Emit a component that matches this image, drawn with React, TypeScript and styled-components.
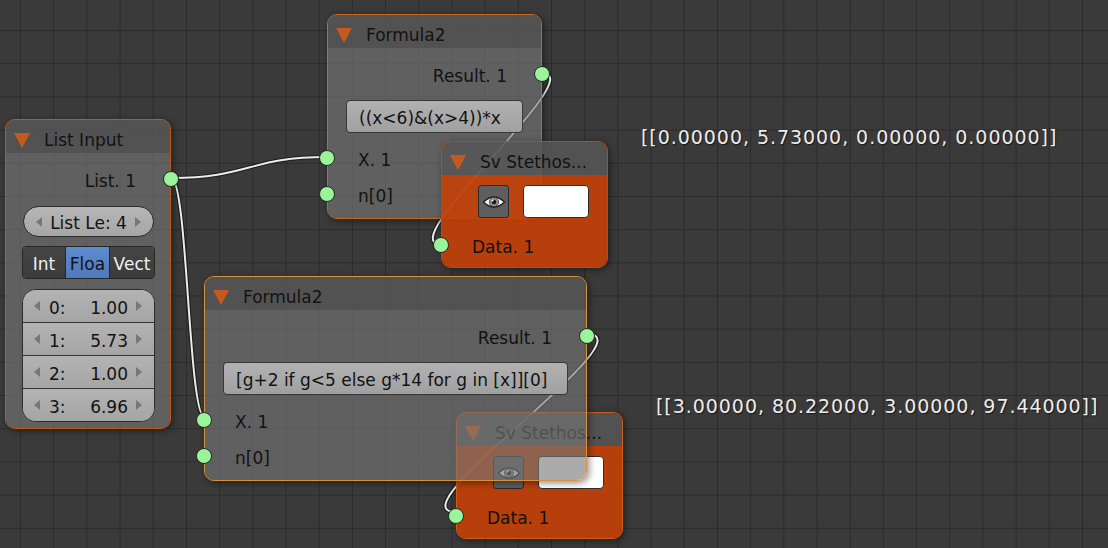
import React from "react";
import styled, { createGlobalStyle } from "styled-components";

const links = [
  { from: [171, 178], to: [327, 157] },
  { from: [171, 178], to: [205, 418] },
  { from: [542, 73], to: [441, 244] },
  { from: [587, 334], to: [456, 512] },
];

// blender style bezier: handle length is half the horizontal distance
function linkPath(from: number[], to: number[]) {
  const h = Math.abs(to[0] - from[0]) * 0.5;
  return `M${from[0]},${from[1]} C${from[0] + h},${from[1]} ${to[0] - h},${to[1]} ${to[0]},${to[1]}`;
}

function EyeIcon() {
  return (
    <svg width="24" height="14" viewBox="0 0 24 14">
      <path d="M1.5 7 Q12 -3 22.5 7 Q12 17 1.5 7 Z" fill="#f2f2f2" stroke="#1e1e1e" strokeWidth="1.3" />
      <circle cx="12" cy="7" r="4.6" fill="#8c8c8c" stroke="#3a3a3a" strokeWidth="0.8" />
      <circle cx="12" cy="7" r="2.2" fill="#151515" />
      <circle cx="10.6" cy="5.6" r="1" fill="#ffffff" />
    </svg>
  );
}

type NodeProps = {
  title: string;
  x: number;
  y: number;
  w: number;
  z: number;
  edge: string;
  tone?: "gray" | "orange";
  children: React.ReactNode;
};

function Node({ title, x, y, w, z, edge, tone = "gray", children }: NodeProps) {
  return (
    <NodeFrame $x={x} $y={y} $w={w} $z={z} $edge={edge}>
      <Header>
        <Collapse />
        <Title>{title}</Title>
      </Header>
      <Body $tone={tone}>{children}</Body>
    </NodeFrame>
  );
}

function OutputRow({ label }: { label: string }) {
  return (
    <OutRow>
      {label}
      <Socket $side="right" />
    </OutRow>
  );
}

function InputRow({ label, tall }: { label: string; tall?: boolean }) {
  return (
    <InRow $tall={tall}>
      <Socket $side="left" />
      {label}
    </InRow>
  );
}

function Stethoscope({ x, y, z, edge }: { x: number; y: number; z: number; edge: string }) {
  return (
    <Node title="Sv Stethos..." x={x} y={y} w={167} z={z} edge={edge} tone="orange">
      <ControlRow>
        <EyeButton>
          <EyeIcon />
        </EyeButton>
        <ColorField />
      </ControlRow>
      <InputRow label="Data. 1" />
    </Node>
  );
}

export default function App() {
  const values = [
    ["0:", "1.00"],
    ["1:", "5.73"],
    ["2:", "1.00"],
    ["3:", "6.96"],
  ];

  return (
    <Canvas>
      <GlobalStyle />
      <Links width="1108" height="548" viewBox="0 0 1108 548">
        {links.map((l, i) => (
          <g key={i} fill="none">
            <path d={linkPath(l.from, l.to)} stroke="#1c1c1c" strokeWidth="4.2" />
            <path d={linkPath(l.from, l.to)} stroke="#ececec" strokeWidth="2" />
          </g>
        ))}
      </Links>

      <Node title="List Input" x={5} y={119} w={166} z={1} edge="#c2591c">
        <OutputRow label="List. 1" />
        <Pill>
          <Arrow $dir="left" />
          <span>List Le: 4</span>
          <Arrow $dir="right" />
        </Pill>
        <Enum>
          <EnumItem $w={42}>Int</EnumItem>
          <EnumItem $w={43} $active>Floa</EnumItem>
          <EnumItem>Vect</EnumItem>
        </Enum>
        <NumList>
          {values.map(([k, v]) => (
            <NumRow key={k}>
              <Arrow $dir="left" />
              <NumKey>{k}</NumKey>
              <NumValue>{v}</NumValue>
              <Arrow $dir="right" />
            </NumRow>
          ))}
        </NumList>
      </Node>

      <Node title="Formula2" x={327} y={14} w={215} z={2} edge="#c9661f">
        <OutputRow label="Result. 1" />
        <Field>((x&lt;6)&amp;(x&gt;4))*x</Field>
        <InputRow label="X. 1" tall />
        <InputRow label="n[0]" tall />
      </Node>

      <Stethoscope x={441} y={141} z={3} edge="#b94c14" />

      <Stethoscope x={456} y={412} z={4} edge="#cf5e1a" />

      <Node title="Formula2" x={204} y={276} w={383} z={5} edge="#d8913f">
        <OutputRow label="Result. 1" />
        <Field>[g+2 if g&lt;5 else g*14 for g in [x]][0]</Field>
        <InputRow label="X. 1" tall />
        <InputRow label="n[0]" tall />
      </Node>

      <Readout $x={641} $y={126}>[[0.00000, 5.73000, 0.00000, 0.00000]]</Readout>
      <Readout $x={656} $y={395}>[[3.00000, 80.22000, 3.00000, 97.44000]]</Readout>
    </Canvas>
  );
}

const GlobalStyle = createGlobalStyle`
  html, body {
    margin: 0;
    padding: 0;
    background: #393939;
    overflow: hidden;
  }
  body {
    font-family: "DejaVu Sans", "Liberation Sans", sans-serif;
  }
`;

const Canvas = styled.div`
  position: relative;
  width: 1108px;
  height: 548px;
  overflow: hidden;
  background-color: #3a3a3a;
  background-image:
    linear-gradient(to right, #2b2b2b 1.4px, transparent 1.4px),
    linear-gradient(to bottom, #2b2b2b 1.4px, transparent 1.4px);
  background-size: 33.2px 33.2px;
  background-position: 20px 30px;
  font-family: "DejaVu Sans", "Liberation Sans", sans-serif;
`;

const Links = styled.svg`
  position: absolute;
  left: 0;
  top: 0;
  z-index: 0;
`;

const NodeFrame = styled.div<{ $x: number; $y: number; $w: number; $z: number; $edge: string }>`
  position: absolute;
  left: ${(p) => p.$x}px;
  top: ${(p) => p.$y}px;
  width: ${(p) => p.$w}px;
  z-index: ${(p) => p.$z};
  box-sizing: border-box;
  border: 1px solid ${(p) => p.$edge};
  border-radius: 10px;
  box-shadow: 2px 2px 7px rgba(0, 0, 0, 0.45);
  display: flex;
  flex-direction: column;
`;

const Header = styled.div`
  height: 33px;
  box-sizing: border-box;
  padding: 7px 0 0 8px;
  display: flex;
  align-items: center;
  background: rgba(86, 86, 86, 0.86);
  border-radius: 9px 9px 0 0;
`;

const Collapse = styled.span`
  width: 0;
  height: 0;
  border-left: 8px solid transparent;
  border-right: 8px solid transparent;
  border-top: 15px solid #c65a1c;
`;

const Title = styled.span`
  margin-left: 14px;
  font-size: 17px;
  color: #121212;
  white-space: nowrap;
`;

const Body = styled.div<{ $tone: "gray" | "orange" }>`
  display: flex;
  flex-direction: column;
  padding: 10px 0 6px;
  border-radius: 0 0 9px 9px;
  background: ${(p) => (p.$tone === "orange" ? "rgba(196, 64, 8, 0.9)" : "rgba(120, 120, 120, 0.62)")};
  font-size: 17px;
  color: #121212;
`;

const Socket = styled.span<{ $side: "left" | "right" }>`
  position: absolute;
  top: 50%;
  ${(p) => (p.$side === "left" ? "left: -9px;" : "right: -9px;")}
  width: 16px;
  height: 16px;
  transform: translateY(-50%);
  box-sizing: border-box;
  border-radius: 50%;
  background: #9af59a;
  border: 1px solid #262626;
`;

const OutRow = styled.div`
  position: relative;
  height: 32px;
  box-sizing: border-box;
  padding: 4px 34px 0 0;
  display: flex;
  align-items: center;
  justify-content: flex-end;
`;

const InRow = styled.div<{ $tall?: boolean }>`
  position: relative;
  height: ${(p) => (p.$tall ? 36 : 32)}px;
  box-sizing: border-box;
  padding: 4px 0 0 30px;
  display: flex;
  align-items: center;
  &:nth-child(3) {
    margin-top: ${(p) => (p.$tall ? 7 : 11)}px;
  }
  &:nth-child(2) {
    margin-top: 11px;
  }
`;

const Pill = styled.div`
  height: 31px;
  margin: 11px 16px 0 17px;
  box-sizing: border-box;
  border: 1px solid #2c2c2c;
  border-radius: 16px;
  background: linear-gradient(#b6b6b6, #a6a6a6);
  display: flex;
  align-items: center;
  justify-content: space-between;
  padding: 3px 12px 0;
`;

const Arrow = styled.span<{ $dir: "left" | "right" }>`
  width: 0;
  height: 0;
  margin-top: -3px;
  border-top: 5px solid transparent;
  border-bottom: 5px solid transparent;
  ${(p) => (p.$dir === "left" ? "border-right: 6px solid #777;" : "border-left: 6px solid #777;")}
`;

const Enum = styled.div`
  height: 33px;
  margin: 9px 15px 0 16px;
  display: flex;
  box-sizing: border-box;
  border: 1px solid #262626;
  border-radius: 4px;
  overflow: hidden;
`;

const EnumItem = styled.div<{ $w?: number; $active?: boolean }>`
  ${(p) => (p.$w ? `width: ${p.$w}px;` : "flex: 1;")}
  display: flex;
  align-items: center;
  justify-content: center;
  padding-top: 3px;
  background: ${(p) => (p.$active ? "linear-gradient(#5e8bd0, #5079bb)" : "linear-gradient(#454545, #3b3b3b)")};
  color: ${(p) => (p.$active ? "#121212" : "#f0f0f0")};
  & + & {
    border-left: 1px solid #262626;
  }
`;

const NumList = styled.div`
  margin: 10px 15px 0 16px;
  box-sizing: border-box;
  border: 1px solid #2c2c2c;
  border-radius: 14px;
  overflow: hidden;
  background: #ababab;
`;

const NumRow = styled.div`
  height: 32px;
  box-sizing: border-box;
  display: flex;
  align-items: center;
  padding: 3px 12px 0 11px;
  background: linear-gradient(#b3b3b3, #a5a5a5);
  & + & {
    border-top: 1px solid #353535;
    height: 33px;
  }
`;

const NumKey = styled.span`
  margin-left: 9px;
`;

const NumValue = styled.span`
  flex: 1;
  text-align: right;
  margin-right: 8px;
`;

const Field = styled.div`
  height: 33px;
  margin: 10px 18px 0;
  box-sizing: border-box;
  border: 1px solid #383838;
  border-radius: 4px;
  background: linear-gradient(#b2b2b2, #a0a0a0);
  display: flex;
  align-items: center;
  padding: 3px 0 0 12px;
  white-space: nowrap;
`;

const ControlRow = styled.div`
  height: 33px;
  display: flex;
  gap: 14px;
  padding-left: 36px;
`;

const EyeButton = styled.div`
  width: 31px;
  height: 33px;
  box-sizing: border-box;
  border: 1px solid #2a2a2a;
  border-radius: 3px;
  background: #5e5e5e;
  display: flex;
  align-items: center;
  justify-content: center;
`;

const ColorField = styled.div`
  width: 66px;
  height: 33px;
  box-sizing: border-box;
  border: 1px solid #2e2e2e;
  border-radius: 4px;
  background: #ffffff;
`;

const Readout = styled.div<{ $x: number; $y: number }>`
  position: absolute;
  left: ${(p) => p.$x}px;
  top: ${(p) => p.$y}px;
  z-index: 6;
  font-size: 19px;
  letter-spacing: 0.95px;
  line-height: 22px;
  color: #ececec;
  white-space: nowrap;
  text-shadow: 1px 1px 1px rgba(0, 0, 0, 0.6);
`;
